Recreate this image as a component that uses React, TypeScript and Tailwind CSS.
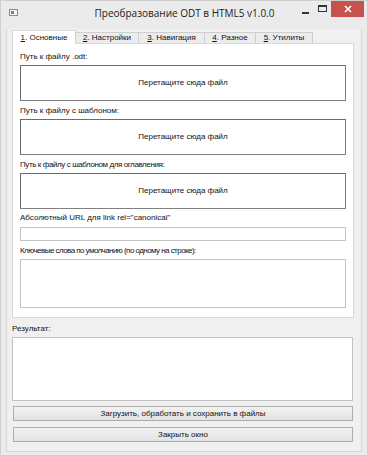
import React from "react";

const F = { fontFamily: '"Liberation Sans", Arial, sans-serif' };

function Tab({ n, label, active, w }: { n: string; label: string; active?: boolean; w: string }) {
  return (
    <div
      className={
        active
          ? `${w} h-[14px] -mb-px bg-white border border-b-0 border-[#d9d9d9] flex items-center justify-center text-[8px] text-[#111] whitespace-nowrap`
          : `${w} h-[11px] -ml-px bg-[#ececec] border border-b-0 border-[#cfcfcf] flex items-center justify-center text-[8px] text-[#111] whitespace-nowrap`
      }
    >
      <span className="leading-none">
        <span className="underline">{n}</span>. {label}
      </span>
    </div>
  );
}

function Drop() {
  return (
    <div className="h-[36px] border border-[#6c6c6c] border-r-[#808080] border-b-[#808080] bg-white flex items-center justify-center text-[8px] text-[#111]">
      Перетащите сюда файл
    </div>
  );
}

function Label({ children, t = "" }: { children: React.ReactNode; t?: string }) {
  return <div className={`h-[14px] leading-[14px] text-[8px] text-[#111] whitespace-nowrap ${t}`}>{children}</div>;
}

export default function App() {
  return (
    <div className="w-[368px] h-[456px] bg-[#ebebeb] border border-[#cfcfcf] flex flex-col" style={F}>
      {/* Title bar */}
      <div className="h-[28px] relative flex items-center justify-center shrink-0">
        <svg className="absolute left-[8px] top-[8px]" width="9" height="7" viewBox="0 0 9 7">
          <rect x="0.5" y="0.5" width="8" height="6" fill="#f4f4f4" stroke="#8c8c8c" />
          <rect x="2" y="2" width="3" height="3" fill="#3aa37e" />
        </svg>
        <div className="text-[10px] text-[#222] -mt-[5px] ml-[1px] leading-none" style={{ fontFamily: '"Open Sans", "Noto Sans", sans-serif' }}>
          Преобразование ODT в HTML5 v1.0.0
        </div>
        <div className="absolute left-[301px] top-[11px] w-[7px] h-[2px] bg-[#333]" />
        <div className="absolute left-[317px] top-[4px] w-[9px] h-[7px] border border-[#333] border-t-2" />
        <div className="absolute left-[330px] top-[0px] w-[33px] h-[16px] bg-[#c7514d] flex items-center justify-center">
          <svg width="8" height="8" viewBox="0 0 8 8">
            <path d="M1 1L7 7M7 1L1 7" stroke="#fff" strokeWidth="1.6" />
          </svg>
        </div>
      </div>

      {/* Client */}
      <div className="mx-[5px] flex-1 bg-[#f0f0f0] border border-t-0 border-[#d6d6d6] mb-[3px] pl-[5px] pr-[7px] flex flex-col">
        <div className="mt-[1px] h-[13px] flex items-end relative z-10">
          <Tab n="1" label="Основные" active w="w-[64px]" />
          <Tab n="2" label="Настройки" w="w-[64px]" />
          <Tab n="3" label="Навигация" w="w-[67px]" />
          <Tab n="4" label="Разное" w="w-[52px]" />
          <Tab n="5" label="Утилиты" w="w-[58px]" />
        </div>
        <div className="h-[275px] bg-white border border-[#d9d9d9] px-[7px] pt-[6px] flex flex-col">
          <Label>Путь к файлу .odt:</Label>
          <div className="mt-[1px]"><Drop /></div>
          <div className="mt-[3px]"><Label>Путь к файлу с шаблоном:</Label></div>
          <div className="mt-[1px]"><Drop /></div>
          <div className="mt-[3px]"><Label t="tracking-[-0.4px]">Путь к файлу с шаблоном для оглавления:</Label></div>
          <div className="mt-[1px]"><Drop /></div>
          <div className="mt-[2px]"><Label>Абсолютный URL для link rel="canonical"</Label></div>
          <div className="mt-[2px] h-[14px] bg-white border border-[#c3c3c3]" />
          <div className="mt-[3px]"><Label t="tracking-[-0.55px]">Ключевые слова по умолчанию (по одному на строке):</Label></div>
          <div className="mt-[1px] h-[49px] bg-white border border-[#c3c3c3]" />
        </div>
        <div className="mt-[4px]"><Label>Результат:</Label></div>
        <div className="mt-[1px] h-[64px] bg-white border border-[#c3c3c3] w-[341px]" />
        <button className="mt-[5px] mx-[1px] h-[15px] border border-[#adadad] bg-gradient-to-b from-[#f2f2f2] to-[#e3e3e3] text-[8px] text-[#111] leading-none flex items-center justify-center">
          Загрузить, обработать и сохранить в файлы
        </button>
        <button className="mt-[6px] mx-[1px] h-[15px] border border-[#adadad] bg-gradient-to-b from-[#f2f2f2] to-[#e3e3e3] text-[8px] text-[#111] leading-none flex items-center justify-center">
          Закрыть окно
        </button>
      </div>
    </div>
  );
}
